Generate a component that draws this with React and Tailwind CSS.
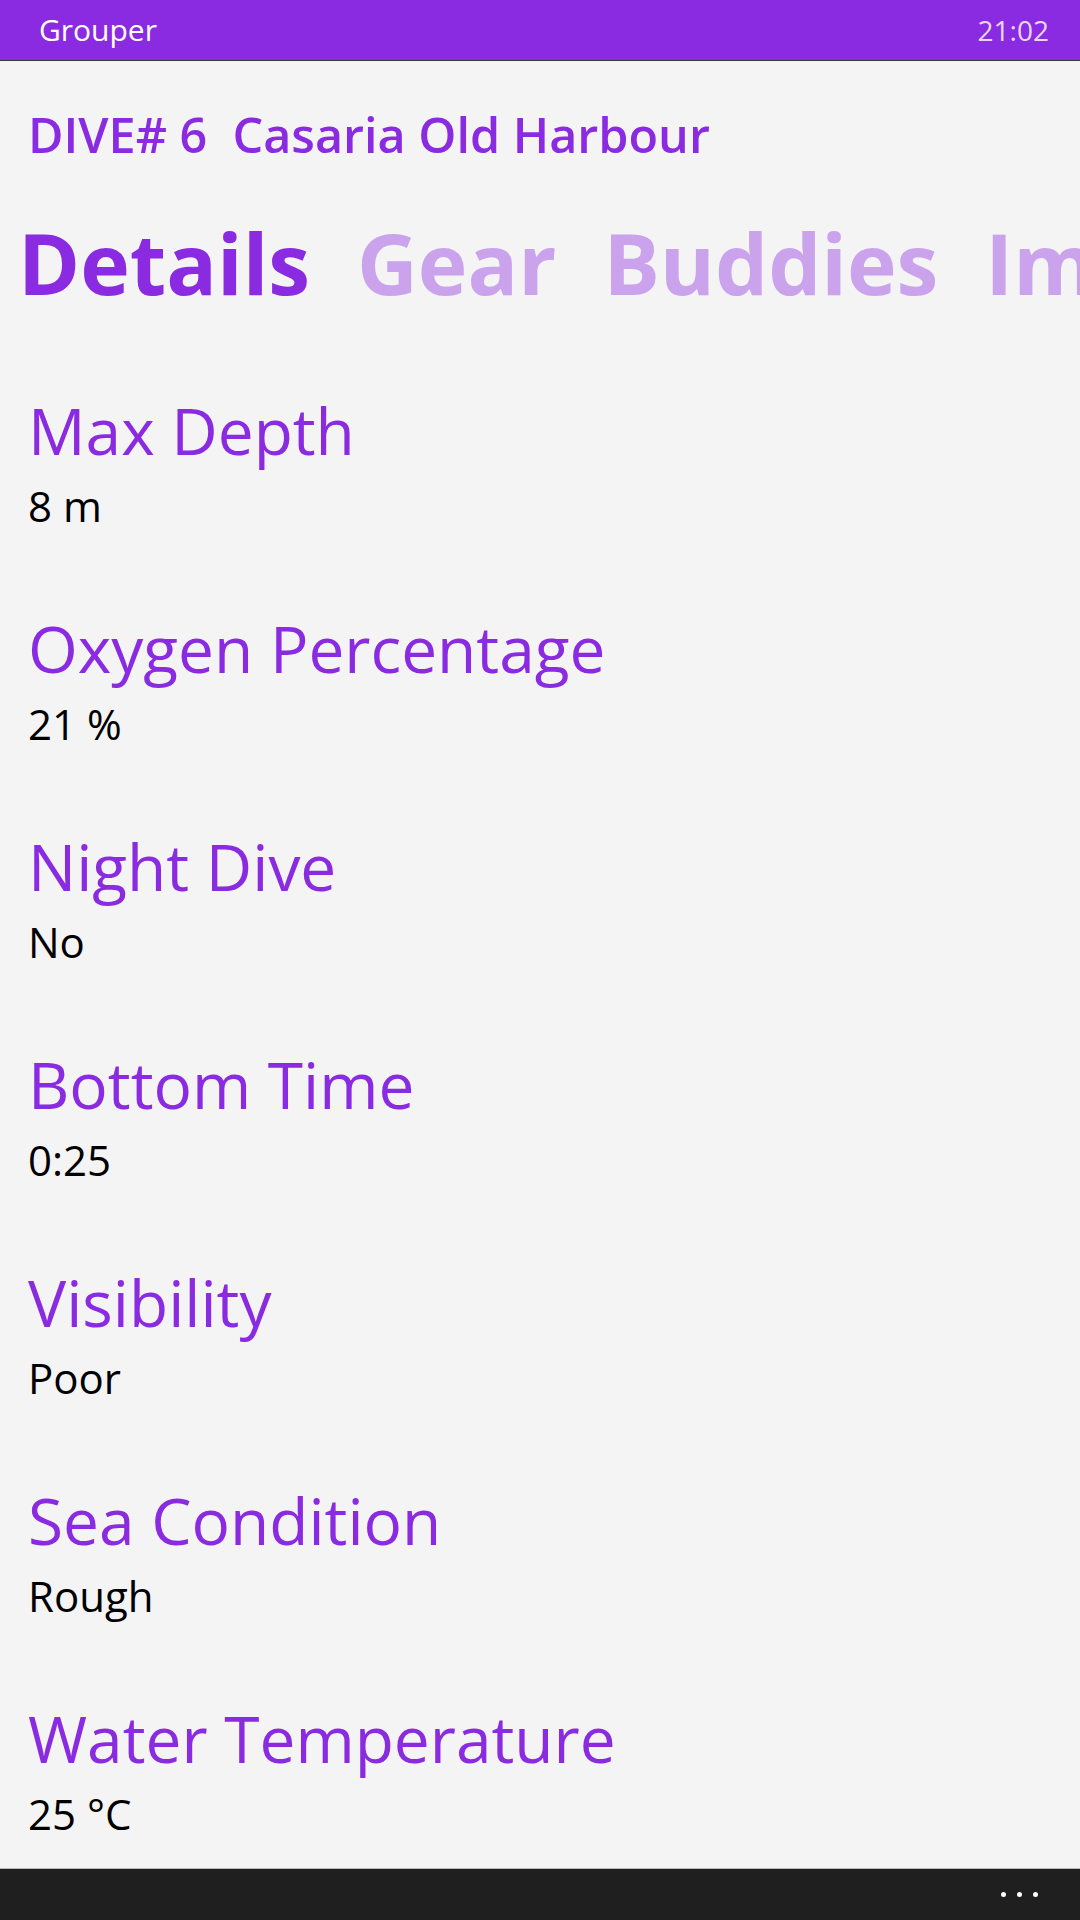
import React from "react";

const details = [
  { label: "Max Depth", value: "8 m" },
  { label: "Oxygen Percentage", value: "21 %" },
  { label: "Night Dive", value: "No" },
  { label: "Bottom Time", value: "0:25" },
  { label: "Visibility", value: "Poor" },
  { label: "Sea Condition", value: "Rough" },
  { label: "Water Temperature", value: "25 °C" },
];

const tabs = ["Details", "Gear", "Buddies", "Images"];

export default function App() {
  return (
    <div
      className="h-[1920px] w-[1080px] flex flex-col bg-[#f4f4f4] overflow-hidden"
      style={{ fontFamily: '"Open Sans", "Noto Sans", sans-serif' }}
    >
      <div className="h-[61px] shrink-0 bg-[#8a2be2] border-b border-[#3a3a3a] flex items-center justify-between pl-[39px] pr-[31px]">
        <span className="text-[30px] leading-none text-white">Grouper</span>
        <span className="text-[28px] leading-none text-[#e6d6f8]">21:02</span>
      </div>

      <div className="flex-1 overflow-hidden pl-[28px]">
        <div className="mt-[49px] text-[48.5px] leading-none font-semibold text-[#8a2be2] whitespace-pre">
          {"DIVE# 6  Casaria Old Harbour"}
        </div>

        <div className="mt-[62px] -ml-[10px] flex gap-[47px] whitespace-nowrap text-[84px] leading-none font-bold">
          {tabs.map((t, i) => (
            <span
              key={t}
              className={i === 0 ? "text-[#8a2be2]" : "text-[#caa3ec]"}
            >
              {t}
            </span>
          ))}
        </div>

        <div className="mt-[94px] flex flex-col gap-[90px]">
          {details.map((d) => (
            <div key={d.label} className="flex flex-col">
              <span className="text-[64px] leading-none text-[#8a2be2]">
                {d.label}
              </span>
              <span className="mt-[22px] text-[42px] leading-none text-black">
                {d.value}
              </span>
            </div>
          ))}
        </div>
      </div>

      <div className="h-[52px] shrink-0 bg-[#1f1f1f] border-t border-[#b8b8b8] flex items-center justify-end pr-[42px]">
        <div className="flex gap-[11px]">
          <span className="w-[5px] h-[5px] rounded-full bg-white" />
          <span className="w-[5px] h-[5px] rounded-full bg-white" />
          <span className="w-[5px] h-[5px] rounded-full bg-white" />
        </div>
      </div>
    </div>
  );
}
